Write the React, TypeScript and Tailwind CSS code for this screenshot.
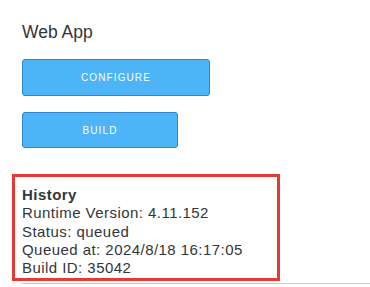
export default function App() {
  return (
    <div className="relative w-[370px] h-[287px] bg-white overflow-hidden text-[#32363a]" style={{ fontFamily: '"Liberation Sans", Arial, sans-serif' }}>
      <div className="pl-[22px] pt-[21px]">
        <h1 className="text-[17.5px] leading-[22px]">Web App</h1>
        <div className="mt-[16px] flex flex-col gap-[16px] items-start">
          <button className="w-[188px] h-[37px] rounded-[3px] bg-[#4db5f7] border border-[#2f86cc] text-white text-[10px] tracking-[1.1px]">
            CONFIGURE
          </button>
          <button className="w-[156px] h-[36px] rounded-[3px] bg-[#4db5f7] border border-[#2f86cc] text-white text-[10px] tracking-[1.1px]">
            BUILD
          </button>
        </div>
        <div className="mt-[38px] pb-[6px] border-b border-[#cccccc] text-[15px] leading-[18.25px] tracking-[0.45px]">
          <div className="font-bold">History</div>
          <div>Runtime Version: 4.11.152</div>
          <div>Status: queued</div>
          <div>Queued at: 2024/8/18 16:17:05</div>
          <div>Build ID: 35042</div>
        </div>
      </div>
      <div className="absolute left-[12px] top-[174px] w-[268px] h-[107px] border-[3px] border-[#e53935]" />
    </div>
  );
}
